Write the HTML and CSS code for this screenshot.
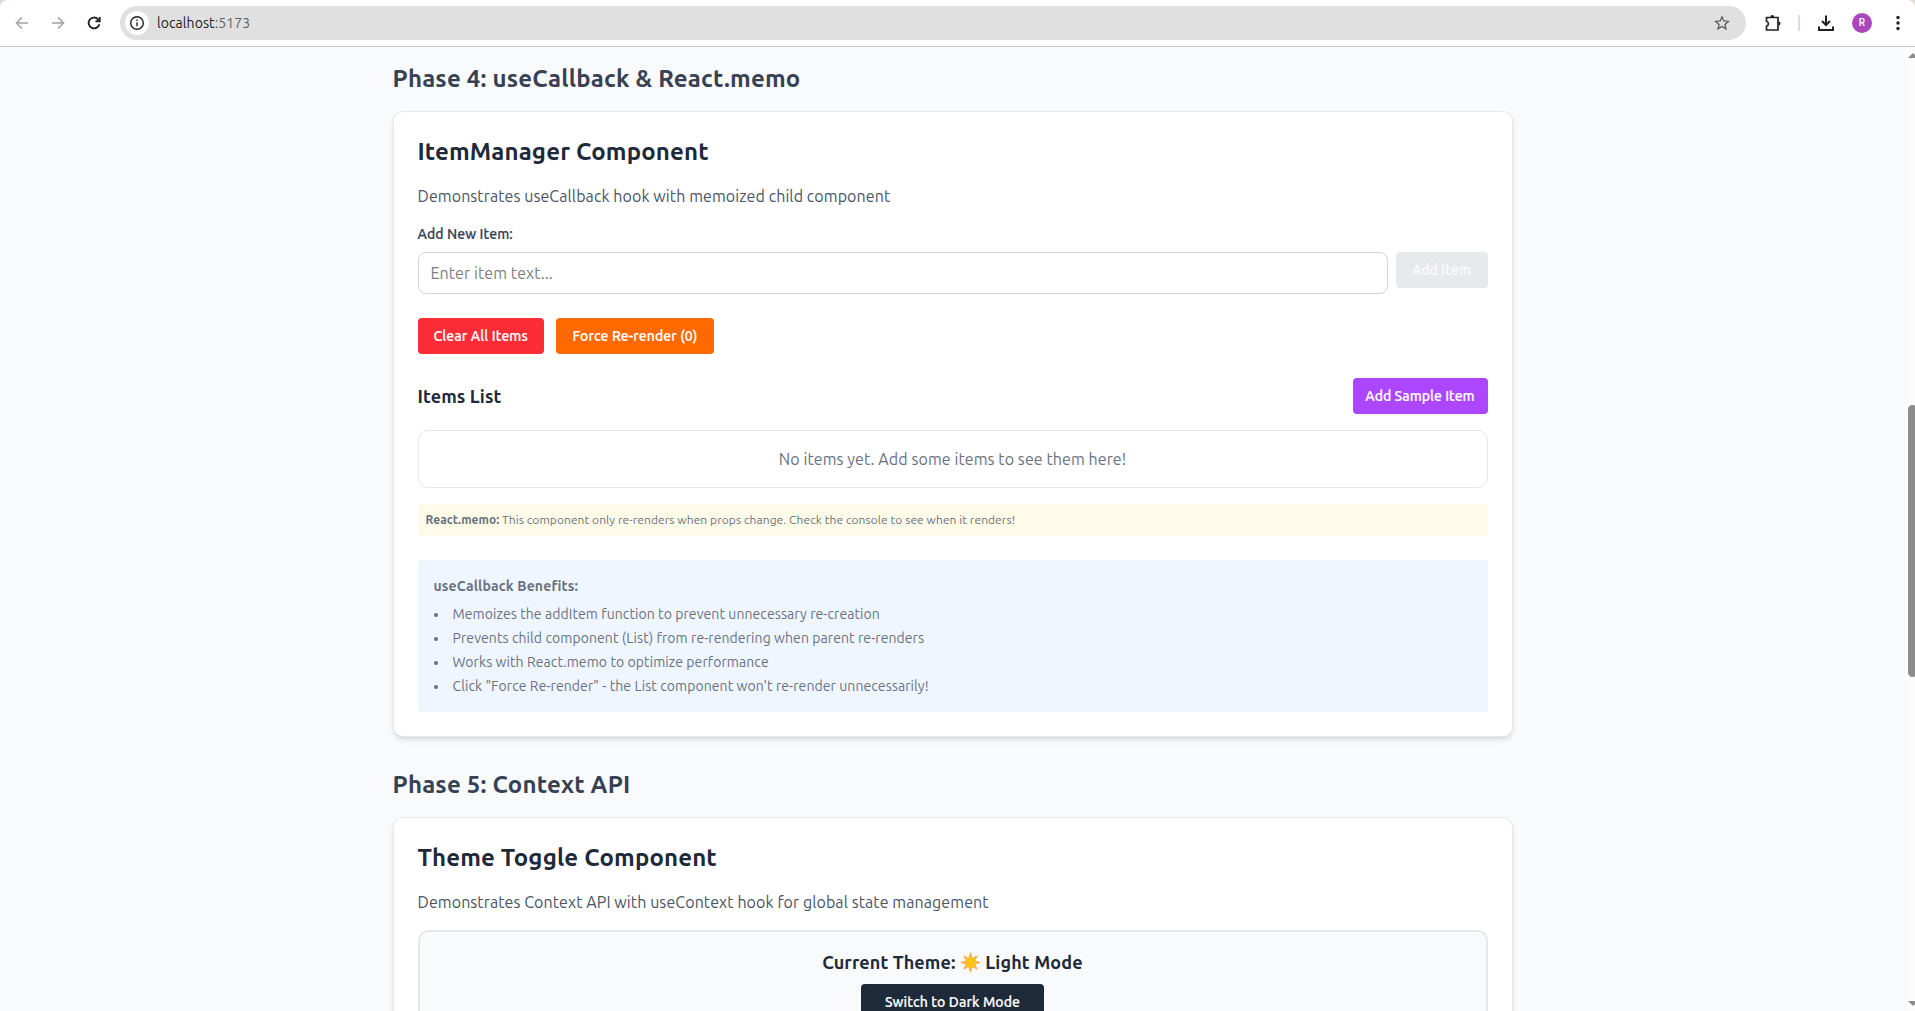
FILE: index.html
```html
<!DOCTYPE html>
<html lang="en">
<head>
<meta charset="utf-8">
<title>React Hooks Demo</title>
<link rel="stylesheet" href="styles.css">
</head>
<body>
<header class="toolbar">
  <svg class="icon back" viewBox="0 0 16 16"><path d="M14 8H3M8 2.5 2.5 8 8 13.5"/></svg>
  <svg class="icon forward" viewBox="0 0 16 16"><path d="M2 8h11M8 2.5 13.500 8 8 13.500"/></svg>
  <svg class="icon reload" viewBox="0 0 16 16"><path d="M13.300 9.200A5.400 5.400 0 1 1 12 4.300L13.400 5.700"/><path d="M13.700 2v4.200H9.500"/></svg>
  <div class="omnibox">
    <span class="site-info"><svg class="icon info" viewBox="0 0 16 16"><circle cx="8" cy="8" r="6.300"/><path d="M8 7.300v4M8 4.600v1.500"/></svg></span>
    <span class="address">localhost<span class="port">:5173</span></span>
    <svg class="icon star" viewBox="0 0 16 16"><path d="M8 1.800 9.800 6l4.600.4-3.500 3 1.100 4.500L8 11.500l-4 2.400 1.100-4.500-3.500-3L6.200 6z"/></svg>
  </div>
  <svg class="icon puzzle" viewBox="0 0 18 18"><path d="M2.500 3.500H14v12.500H2.500v-3.700a2.600 2.600 0 0 0 0-5z"/><path class="solid" d="M6.300 3a2 2 0 0 1 4 0zM14.500 7.500a2 2 0 0 1 0 4z"/></svg>
  <span class="divider"></span>
  <svg class="icon download" viewBox="0 0 18 18"><path d="M9 1.500v9M5 7l4 4 4-4M2 12.500V16h14v-3.500"/></svg>
  <span class="avatar">R</span>
  <svg class="icon dots" viewBox="0 0 4 16"><circle cx="2" cy="2.500" r="1.700"/><circle cx="2" cy="8" r="1.700"/><circle cx="2" cy="13.500" r="1.700"/></svg>
</header>
<div class="viewport">
  <main class="page">
    <section class="phase">
      <h2 class="phase-title">Phase 4: useCallback &amp; React.memo</h2>
      <div class="card">
        <h3 class="card-title">ItemManager Component</h3>
        <p class="lead">Demonstrates useCallback hook with memoized child component</p>
        <label class="label" for="item">Add New Item:</label>
        <div class="field-row">
          <input class="input" id="item" type="text" placeholder="Enter item text...">
          <button class="btn add">Add Item</button>
        </div>
        <div class="actions">
          <button class="btn clear">Clear All Items</button>
          <button class="btn force">Force Re-render (0)</button>
        </div>
        <div class="list-head">
          <h4 class="subtitle">Items List</h4>
          <button class="btn sample">Add Sample Item</button>
        </div>
        <div class="empty">No items yet. Add some items to see them here!</div>
        <div class="memo-note"><strong>React.memo:</strong> This component only re-renders when props change. Check the console to see when it renders!</div>
        <div class="benefits">
          <strong class="benefits-title">useCallback Benefits:</strong>
          <ul class="benefit-list">
            <li>Memoizes the addItem function to prevent unnecessary re-creation</li>
            <li>Prevents child component (List) from re-rendering when parent re-renders</li>
            <li>Works with React.memo to optimize performance</li>
            <li>Click "Force Re-render" - the List component won't re-render unnecessarily!</li>
          </ul>
        </div>
      </div>
    </section>
    <section class="phase">
      <h2 class="phase-title">Phase 5: Context API</h2>
      <div class="card">
        <h3 class="card-title">Theme Toggle Component</h3>
        <p class="lead">Demonstrates Context API with useContext hook for global state management</p>
        <div class="theme-box">
          <h4 class="theme-state">Current Theme:
            <svg class="sun" viewBox="0 0 20 20"><path class="rays" d="m10 0 1.700 4.500H8.300zM10 20l-1.700-4.500h3.400zM0 10l4.500-1.700v3.400zM20 10l-4.500 1.700V8.300zM3 3l4.300 2-2.300 2.300zM17 3l-2 4.300L12.700 5zM3 17l2-4.300L7.300 15zM17 17l-4.300-2 2.300-2.300z"/><circle class="disc" cx="10" cy="10" r="5.500"/></svg>
            Light Mode</h4>
          <button class="btn toggle">Switch to Dark Mode</button>
        </div>
      </div>
    </section>
  </main>
  <div class="scrollbar">
    <svg class="arrow" viewBox="0 0 10 5"><path d="M5 0l5 5H0z"/></svg>
    <span class="thumb"></span>
    <svg class="arrow down" viewBox="0 0 10 5"><path d="M0 0h10L5 5z"/></svg>
  </div>
</div>
</body>
</html>
```
FILE: styles.css
```css
* { box-sizing: border-box; margin: 0; padding: 0; }

body {
  height: 1011px;
  overflow: hidden;
  display: flex;
  flex-direction: column;
  background: #e6dad6;
  font-family: Ubuntu, "Noto Sans", sans-serif;
  font-size: 16px;
  line-height: 24px;
  letter-spacing: .083px;
}

/* Browser toolbar */
.toolbar {
  height: 47px;
  flex: none;
  display: flex;
  align-items: center;
  padding: 0 0 1px 14px;
  background: #fff;
  border-bottom: 1px solid #c8c8c8;
  border-radius: 8px 8px 0 0;
}
.icon { width: 16px; height: 16px; flex: none; fill: none; stroke: #202124; stroke-width: 1.7; }
.back, .forward { stroke: #a3a3a3; stroke-width: 1.6; }
.forward, .reload { margin-left: 20px; }
.reload { stroke-width: 1.9; }
.omnibox {
  width: 1626px;
  height: 34px;
  margin-left: 18px;
  padding: 0 16px 0 5px;
  display: flex;
  align-items: center;
  background: #e0e0e0;
  border-radius: 17px;
}
.site-info {
  width: 24px;
  height: 24px;
  display: flex;
  align-items: center;
  justify-content: center;
  background: #fff;
  border-radius: 50%;
}
.info { stroke-width: 1.4; }
.address { flex: 1; margin-left: 8px; font-size: 14px; color: #202124; }
.port { color: #5f6063; }
.star { stroke: #5a5c60; stroke-width: 1.3; }
.puzzle { width: 18px; height: 18px; margin-left: 18px; }
.puzzle .solid { fill: #202124; stroke: none; }
.divider { width: 2px; height: 16px; margin-left: 16px; background: #e6dad6; }
.download { width: 18px; height: 18px; margin-left: 17px; stroke-width: 2; }
.avatar {
  width: 20px;
  height: 20px;
  margin-left: 17px;
  border-radius: 50%;
  background: #ab47bc;
  color: #fff;
  font: 500 10px/20px Roboto, sans-serif;
  text-align: center;
}
.dots { width: 4px; margin-left: 24px; fill: #202124; stroke: none; }

/* Page and scrollbar */
.viewport { flex: 1; min-height: 0; display: flex; overflow: hidden; background: #f9fafb; }
.page { flex: 1; padding: 16px 392.5px 0; }
.scrollbar {
  width: 10px;
  height: 964px;
  display: flex;
  flex-direction: column;
  align-items: flex-start;
  padding: 6px 0 5px 3px;
  background: #fcfcfc;
  overflow: hidden;
}
.arrow { width: 10px; height: 5px; flex: none; fill: #8b8b8b; }
.thumb { width: 9px; height: 272px; flex: none; margin-top: 347px; background: #8b8b8b; border-radius: 4.500px; }
.down { margin-top: auto; }

/* Sections */
.phase { margin-bottom: 32px; }
.phase-title, .card-title {
  margin-bottom: 16px;
  font-size: 24px;
  line-height: 32px;
  font-weight: 700;
}
.phase-title { color: #364153; letter-spacing: .2px; }
.card-title { color: #1e2939; letter-spacing: .15px; }
.card {
  padding: 24px;
  background: #fff;
  border: 1px solid #e5e7eb;
  border-radius: 10px;
  box-shadow: 0 4px 6px -1px rgba(0, 0, 0, .1), 0 2px 4px -2px rgba(0, 0, 0, .1);
}
.lead { margin-bottom: 16px; color: #4a5565; }
.label {
  display: block;
  margin-bottom: 8px;
  font-size: 14px;
  line-height: 20px;
  font-weight: 500;
  color: #364153;
  -webkit-text-stroke: .2px;
}

/* Form and buttons */
.field-row { display: flex; align-items: flex-start; gap: 8px; margin-bottom: 24px; }
.input {
  flex: 1;
  height: 42px;
  padding: 8px 12px;
  border: 1px solid #d1d5dc;
  border-radius: 8px;
  font: inherit;
  letter-spacing: inherit;
}
.input::placeholder { color: #808080; }
.btn {
  height: 36px;
  border: 0;
  border-radius: 4px;
  font: 500 14px/20px Ubuntu, "Noto Sans", sans-serif;
  letter-spacing: .1px;
  color: #fff;
  white-space: nowrap;
  -webkit-text-stroke: .2px;
}
.add { width: 92px; background: #e8e9ed; color: #fafafb; }
.actions { display: flex; gap: 12px; margin-bottom: 24px; }
.clear { width: 126.500px; background: #fb2c36; }
.force { width: 158px; background: #ff6900; }
.list-head { display: flex; align-items: center; justify-content: space-between; margin-bottom: 16px; }
.sample { width: 135px; background: #ad46ff; letter-spacing: .02px; }
.subtitle, .theme-state {
  font-size: 18px;
  line-height: 28px;
  font-weight: 600;
  letter-spacing: .13px;
  color: #1e2939;
}
.empty {
  margin-bottom: 16px;
  padding: 16px;
  border: 1px solid #e5e7eb;
  border-radius: 10px;
  text-align: center;
  color: #6a7282;
}

/* Notes */
.memo-note {
  margin-bottom: 24px;
  padding: 8px;
  border-radius: 4px;
  background: #fefce8;
  font-size: 12px;
  line-height: 16px;
  letter-spacing: .06px;
  color: #6a7282;
}
.benefits {
  padding: 16px;
  border-radius: 4px;
  background: #eff6ff;
  font-size: 14px;
  line-height: 20px;
  color: #6a7282;
}
.benefits-title { display: block; margin-bottom: 8px; letter-spacing: .14px; }
.benefit-list { display: grid; gap: 4px; list-style: none; }
.benefit-list li { display: flex; align-items: center; gap: 14.500px; }
.benefit-list li::before { content: ""; width: 4px; height: 4px; margin: 2px 0 0 .5px; border-radius: 50%; background: #6a7282; }

/* Theme panel */
.theme-box {
  height: 140px;
  padding: 16px;
  border: 2px solid #e5e7eb;
  border-radius: 10px;
  background: #f9fafb;
  text-align: center;
}
.theme-state { margin-bottom: 8px; }
.sun { width: 21px; height: 21px; vertical-align: -4px; }
.rays { fill: #f5a83c; }
.disc { fill: #fcc21b; }
.toggle { width: 183px; background: #1e2939; }
```
